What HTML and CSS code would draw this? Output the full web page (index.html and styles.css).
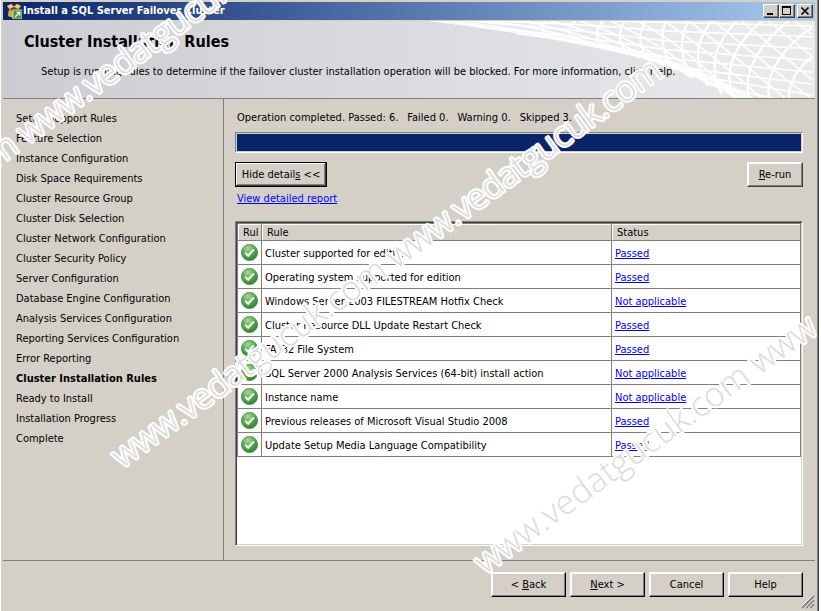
FILE: index.html
```html
<!DOCTYPE html>
<html lang="en">
<head>
    <meta charset="UTF-8">
    <meta name="viewport" content="width=device-width, initial-scale=1.0">
    <title>Install a SQL Server Failover Cluster</title>
    <link rel="stylesheet" href="styles.css">
</head>
<body>
    <!-- Shared symbols -->
    <svg class="symbols" aria-hidden="true">
        <defs>
            <radialGradient id="passFill" cx="0.4" cy="0.25" r="0.8">
                <stop offset="0" stop-color="#a5dc92"/>
                <stop offset="0.45" stop-color="#5fb056"/>
                <stop offset="1" stop-color="#2f7a2d"/>
            </radialGradient>
            <symbol id="pass" viewBox="0 0 16 16">
                <circle cx="8" cy="8" r="7.6" fill="url(#passFill)" stroke="#4c8a48" stroke-width="0.8"/>
                <path d="M4 8.4 L6.8 11 L12 5" fill="none" stroke="#fff" stroke-width="1.9"/>
            </symbol>
        </defs>
    </svg>

    <div class="window">
        <div class="title-bar">
            <svg class="app-icon" viewBox="0 0 16 16" aria-hidden="true">
                <path d="M1 3 L5 1 L8 3 L11 1 L15 3 L13 6 L14 13 L8 15 L2 13 L3 6 Z" fill="#b47a3c"/>
                <path d="M1 3 L5 1 L8 4 L4 6 Z M15 3 L11 1 L8 4 L12 6 Z" fill="#f0c878"/>
                <path d="M4 6 L8 4 L12 6 L8 8 Z" fill="#6e3f16"/>
                <path d="M3 7 L8 9 L8 15 L2 13 Z" fill="#d9a45c"/>
                <rect x="7" y="7" width="9" height="9" fill="#3d9a3d" stroke="#d8f0d0" stroke-width="0.8"/>
                <path d="M9 14 L13.5 9.5 M10.5 9.3 H13.7 V12.5" fill="none" stroke="#fff" stroke-width="1.3"/>
            </svg>
            <span class="title-text">Install a SQL Server Failover Cluster</span>
            <div class="window-buttons">
                <button class="caption-button" aria-label="Minimize">
                    <svg viewBox="0 0 12 10"><path d="M2 8 H8" stroke="#000" stroke-width="2"/></svg>
                </button>
                <button class="caption-button" aria-label="Maximize">
                    <svg viewBox="0 0 12 10"><path d="M1.5 1.5 H9.5 V8.5 H1.5 Z" fill="none" stroke="#000"/><path d="M1 1 H10" stroke="#000" stroke-width="2"/></svg>
                </button>
                <button class="caption-button close" aria-label="Close">
                    <svg viewBox="0 0 12 10"><path d="M2.5 1.5 L9.5 8.5 M9.5 1.5 L2.5 8.5" stroke="#000" stroke-width="1.7"/></svg>
                </button>
            </div>
        </div>

        <header class="page-header">
            <svg class="mesh" viewBox="0 0 390 78" aria-hidden="true">
                <path d="M0 0 Q120 14 220 38 Q270 54 312 78 H390 V0 Z" fill="#e9ebeb"/>
                <!-- bright lower edge of the net -->
                <path d="M0 0 Q120 14 220 38 Q270 54 312 78 H330 Q280 48 220 32 Q120 10 30 0 Z" fill="#fafafa"/>
                <g fill="none" stroke="#fff" stroke-width="1.6">
                    <path d="M40 0 Q150 8 240 20 L390 28"/>
                    <path d="M70 0 Q160 3 240 10 L390 16"/>
                    <path d="M50 6 Q150 14 240 29 L390 40"/>
                    <path d="M90 13 Q170 22 255 39 L390 52"/>
                    <path d="M140 20 Q200 28 262 48 L390 64"/>
                    <path d="M180 28 Q230 38 275 56 L390 75"/>
                    <path d="M220 38 Q260 48 290 65 L350 78"/>
                    <path d="M190 0 L390 5"/>
                    <path d="M60 0 Q130 8 180 28"/>
                    <path d="M95 0 Q160 12 215 37"/>
                    <path d="M125 0 Q190 16 240 46"/>
                    <path d="M155 0 Q215 20 265 56"/>
                    <path d="M185 0 Q240 24 288 66"/>
                    <path d="M213 0 Q265 28 312 78"/>
                    <path d="M240 0 Q290 34 338 78"/>
                    <path d="M265 0 Q310 34 362 78"/>
                    <path d="M290 0 Q330 34 388 78"/>
                    <path d="M318 0 L390 60"/>
                    <path d="M345 0 L390 36"/>
                    <path d="M372 0 L390 14"/>
                </g>
                <g fill="none" stroke="#fff" stroke-width="2.2">
                    <path d="M120 0 Q112 8 122 16"/>
                    <path d="M150 0 Q138 10 150 22"/>
                    <path d="M178 0 Q166 12 178 28"/>
                    <path d="M200 0 Q188 18 204 34"/>
                    <path d="M221 0 Q208 22 226 41"/>
                    <path d="M241 0 Q232 24 250 50"/>
                    <path d="M264 0 Q250 28 268 58"/>
                    <path d="M288 0 Q262 32 284 66"/>
                    <path d="M313 0 Q278 36 298 74"/>
                    <path d="M339 0 Q294 38 310 78"/>
                    <path d="M366 0 Q316 40 326 78"/>
                    <path d="M390 6 Q340 42 346 78"/>
                    <path d="M390 36 Q366 54 366 78"/>
                </g>
            </svg>
            <h1>Cluster Installation Rules</h1>
            <p>Setup is running rules to determine if the failover cluster installation operation will be blocked. For more information, click Help.</p>
        </header>

        <div class="content">
            <ul class="steps">
                <li>Setup Support Rules</li>
                <li>Feature Selection</li>
                <li>Instance Configuration</li>
                <li>Disk Space Requirements</li>
                <li>Cluster Resource Group</li>
                <li>Cluster Disk Selection</li>
                <li>Cluster Network Configuration</li>
                <li>Cluster Security Policy</li>
                <li>Server Configuration</li>
                <li>Database Engine Configuration</li>
                <li>Analysis Services Configuration</li>
                <li>Reporting Services Configuration</li>
                <li>Error Reporting</li>
                <li class="current">Cluster Installation Rules</li>
                <li>Ready to Install</li>
                <li>Installation Progress</li>
                <li>Complete</li>
            </ul>

            <main class="rules">
                <div class="summary">
                    <span>Operation completed. Passed: 6.</span>
                    <span>Failed 0.</span>
                    <span>Warning 0.</span>
                    <span>Skipped 3.</span>
                </div>
                <div class="progress" role="progressbar" aria-valuenow="100" aria-label="Rule check progress">
                    <div class="progress-fill"></div>
                </div>
                <div class="actions">
                    <button class="button default">Hide detail<u>s</u> &lt;&lt;</button>
                    <button class="button rerun"><u>R</u>e-run</button>
                </div>
                <a class="report-link" href="#">View detailed report</a>

                <div class="list-box">
                    <table>
                        <colgroup>
                            <col class="col-icon">
                            <col class="col-rule">
                            <col class="col-status">
                        </colgroup>
                        <thead>
                            <tr><th>Rul</th><th>Rule</th><th>Status</th></tr>
                        </thead>
                        <tbody>
                            <tr><td><svg class="pass-icon"><use href="#pass"/></svg></td><td>Cluster supported for edition</td><td><a href="#">Passed</a></td></tr>
                            <tr><td><svg class="pass-icon"><use href="#pass"/></svg></td><td>Operating system supported for edition</td><td><a href="#">Passed</a></td></tr>
                            <tr><td><svg class="pass-icon"><use href="#pass"/></svg></td><td>Windows Server 2003 FILESTREAM Hotfix Check</td><td><a href="#">Not applicable</a></td></tr>
                            <tr><td><svg class="pass-icon"><use href="#pass"/></svg></td><td>Cluster Resource DLL Update Restart Check</td><td><a href="#">Passed</a></td></tr>
                            <tr><td><svg class="pass-icon"><use href="#pass"/></svg></td><td>FAT32 File System</td><td><a href="#">Passed</a></td></tr>
                            <tr><td><svg class="pass-icon"><use href="#pass"/></svg></td><td>SQL Server 2000 Analysis Services (64-bit) install action</td><td><a href="#">Not applicable</a></td></tr>
                            <tr><td><svg class="pass-icon"><use href="#pass"/></svg></td><td>Instance name</td><td><a href="#">Not applicable</a></td></tr>
                            <tr><td><svg class="pass-icon"><use href="#pass"/></svg></td><td>Previous releases of Microsoft Visual Studio 2008</td><td><a href="#">Passed</a></td></tr>
                            <tr><td><svg class="pass-icon"><use href="#pass"/></svg></td><td>Update Setup Media Language Compatibility</td><td><a href="#">Passed</a></td></tr>
                        </tbody>
                    </table>
                </div>
            </main>
        </div>

        <footer class="footer">
            <button class="button">&lt; <u>B</u>ack</button>
            <button class="button"><u>N</u>ext &gt;</button>
            <button class="button">Cancel</button>
            <button class="button">Help</button>
            <svg class="grip" viewBox="0 0 14 14" aria-hidden="true">
                <path d="M1 13 L13 1 M5 13 L13 5 M9 13 L13 9" stroke="#808080" stroke-width="1.8"/>
                <path d="M0 12 L12 0 M3.5 13 L13 3.5 M7.5 13 L13 7.5" stroke="#fff" stroke-width="0.8"/>
            </svg>
        </footer>
    </div>

    <!-- Watermark over the whole window -->
    <svg class="watermark" viewBox="0 0 821 611" aria-hidden="true">
        <text transform="translate(-4 168) rotate(-36)">m www.vedatgucuk</text>
        <text transform="translate(122 469) rotate(-36)">www.vedatgucuk.com www.vedatgucuk.com</text>
        <text transform="translate(485 575) rotate(-36)">www.vedatgucuk.com www</text>
    </svg>
</body>
</html>
```

FILE: styles.css
```css
* {
    margin: 0;
    padding: 0;
    box-sizing: border-box;
}

body {
    font-family: Tahoma, 'DejaVu Sans Condensed', 'DejaVu Sans', sans-serif;
    font-stretch: condensed;
    font-size: 11px;
    line-height: 14px;
    color: #000;
    background: #fff;
    position: relative;
    overflow: hidden;
}

.symbols {
    position: absolute;
    width: 0;
    height: 0;
}

.window {
    display: flex;
    flex-direction: column;
    min-height: 100vh;
    margin-right: 2px;
    padding: 2px 2px 0;
    background: #d4d0c8;
    border-left: 1px solid #fff;
    border-right: 1px solid #404040;
    box-shadow: inset -1px 0 #808080;
}

/* Title bar */
.title-bar {
    display: flex;
    align-items: center;
    height: 18px;
    margin-right: 1px;
    padding: 0 2px 0 3px;
    background: linear-gradient(to right, #0a246a, #a6caf0);
    color: #fff;
}

.app-icon {
    width: 16px;
    height: 16px;
}

.title-text {
    flex: 1;
    margin-left: 1px;
    font-weight: bold;
}

.window-buttons {
    display: flex;
}

.caption-button {
    width: 16px;
    height: 14px;
    padding: 1px;
    background: #d4d0c8;
    border: 1px solid;
    border-color: #fff #404040 #404040 #fff;
    box-shadow: inset -1px -1px #808080;
}

.caption-button svg {
    display: block;
    width: 12px;
    height: 10px;
}

.caption-button.close {
    margin-left: 2px;
}

/* Header */
.page-header {
    position: relative;
    height: 79px;
    margin-right: 1px;
    padding: 11px 20px 0 21px;
    background: linear-gradient(to right, #cccdd2, #e9eaec);
    border-top: 1px solid #d4d0c8;
    border-bottom: 1px solid #808080;
}

.mesh {
    position: absolute;
    top: 0;
    right: 0;
    width: 390px;
    height: 77px;
}

.page-header h1 {
    position: relative;
    font-size: 16px;
    line-height: 20px;
}

.page-header p {
    position: relative;
    margin: 13px 0 0 17px;
    white-space: nowrap;
}

/* Content */
.content {
    flex: 1;
    display: flex;
    margin-right: 1px;
    border-bottom: 1px solid #808080;
}

.steps {
    width: 221px;
    padding: 10px 0 0 13px;
    border-right: 1px solid #808080;
    list-style: none;
}

.steps li {
    line-height: 20px;
}

.steps .current {
    font-weight: bold;
}

.rules {
    flex: 1;
    display: flex;
    flex-direction: column;
    padding: 12px 12px 14px 11px;
}

.summary {
    display: flex;
    gap: 9px;
    padding-left: 2px;
}

.progress {
    height: 21px;
    margin-top: 7px;
    padding: 1px;
    border: 1px solid;
    border-color: #808080 #fff #fff #808080;
}

.progress-fill {
    height: 17px;
    background: #0a246a;
}

.actions {
    display: flex;
    justify-content: space-between;
    margin-top: 9px;
}

.button {
    width: 75px;
    height: 25px;
    font: inherit;
    background: #d4d0c8;
    border: 1px solid;
    border-color: #fff #000 #000 #fff;
    box-shadow: inset -1px -1px #808080, inset 1px 1px #fff;
}

.button.default {
    width: 92px;
    border-color: #000;
    box-shadow: inset -1px -1px #404040, inset 1px 1px #fff, inset -2px -2px #808080;
}

.button.rerun {
    width: 56px;
    border-color: #fff #404040 #404040 #fff;
}

a {
    color: #00f;
}

.report-link {
    align-self: flex-start;
    margin: 5px 0 0 2px;
}

/* Rules list */
.list-box {
    flex: 1;
    margin-top: 15px;
    padding: 1px 1px 0;
    background: #fff;
    border: 1px solid;
    border-color: #808080 #fff #fff #808080;
    box-shadow: inset 1px 1px #404040, inset -1px -1px #d4d0c8;
}

table {
    width: 100%;
    table-layout: fixed;
    border-collapse: separate;
    border-spacing: 0;
    border-left: 1px solid #808080;
    border-top: 1px solid #808080;
}

.col-icon {
    width: 24px;
}

.col-rule {
    width: 350px;
}

th,
td {
    border-right: 1px solid #808080;
    border-bottom: 1px solid #808080;
    text-align: left;
    vertical-align: middle;
    white-space: nowrap;
    overflow: hidden;
}

th {
    height: 17px;
    padding: 2px 0 0 5px;
    background: #d4d0c8;
    font-weight: normal;
    box-shadow: inset 1px 1px #fff;
}

td {
    height: 24px;
    padding: 2px 0 0 3px;
}

td:first-child {
    padding-top: 0;
}

.pass-icon {
    display: block;
    width: 17px;
    height: 17px;
}

/* Footer */
.footer {
    display: flex;
    justify-content: flex-end;
    gap: 4px;
    height: 50px;
    padding: 11px 13px 0 0;
    position: relative;
}

.grip {
    position: absolute;
    right: 1px;
    bottom: 2px;
    width: 14px;
    height: 14px;
}

/* Watermark */
.watermark {
    position: absolute;
    top: 0;
    left: 0;
    width: 821px;
    height: 611px;
    pointer-events: none;
}

.watermark text {
    font-family: 'Open Sans', sans-serif;
    font-size: 34px;
    font-weight: 300;
    font-stretch: normal;
    fill: #dcdcdc;
    stroke: #fff;
    stroke-width: 4px;
    stroke-linejoin: round;
    paint-order: stroke;
}
```
